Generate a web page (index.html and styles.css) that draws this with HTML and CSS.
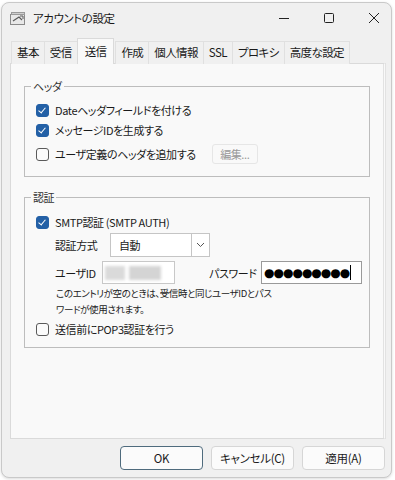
FILE: index.html
```html
<!DOCTYPE html>
<html lang="ja">
<head>
<meta charset="utf-8">
<link rel="stylesheet" href="styles.css">
</head>
<body>
<div class="window">
  <div class="titlebar">
    <svg class="appicon" width="16" height="14" viewBox="0 0 16 14">
      <rect x="0.5" y="2.5" width="14" height="10" fill="#e8e8e8" stroke="#8a8a8a"/>
      <rect x="1.5" y="0.5" width="13" height="2" fill="#cfcfcf" stroke="#9a9a9a"/>
      <path d="M3 9 L9 5 L12 8" fill="none" stroke="#5a5a5a" stroke-width="1.2"/>
      <path d="M10 4 L13 4 L13 7" fill="none" stroke="#5a5a5a" stroke-width="1"/>
    </svg>
    <span class="title">アカウントの設定</span>
    <div class="controls">
      <svg width="12" height="12" viewBox="0 0 12 12"><path d="M1 6.5 H11" stroke="#222" stroke-width="1"/></svg>
      <svg width="12" height="12" viewBox="0 0 12 12"><rect x="1.5" y="1.5" width="9" height="9" rx="1" fill="none" stroke="#222"/></svg>
      <svg width="12" height="12" viewBox="0 0 12 12"><path d="M1 1 L11 11 M11 1 L1 11" stroke="#222" stroke-width="1"/></svg>
    </div>
  </div>

  <div class="tabs">
    <div class="tab">基本</div>
    <div class="tab">受信</div>
    <div class="tab active">送信</div>
    <div class="tab">作成</div>
    <div class="tab">個人情報</div>
    <div class="tab">SSL</div>
    <div class="tab">プロキシ</div>
    <div class="tab">高度な設定</div>
  </div>

  <div class="panel">
    <div class="group g1">
      <div class="legend">ヘッダ</div>
      <div class="row"><span class="cb on"></span><span>Dateヘッダフィールドを付ける</span></div>
      <div class="row"><span class="cb on"></span><span>メッセージIDを生成する</span></div>
      <div class="row r3"><span class="cb"></span><span>ユーザ定義のヘッダを追加する</span><span class="btn-dis">編集...</span></div>
    </div>

    <div class="group g2">
      <div class="legend">認証</div>
      <div class="row"><span class="cb on"></span><span>SMTP認証 (SMTP AUTH)</span></div>
      <div class="sub">
        <div class="field-row fr1">
          <span class="lbl l1">認証方式</span>
          <div class="select"><span class="sel-val">自動</span><span class="sel-arrow"><svg width="9" height="6" viewBox="0 0 9 6"><path d="M1 1 L4.5 4.5 L8 1" fill="none" stroke="#555" stroke-width="1"/></svg></span></div>
        </div>
        <div class="field-row fr2">
          <span class="lbl uid">ユーザID</span>
          <div class="input user"><span class="blur b1"></span><span class="blur b2"></span></div>
          <span class="lbl pw">パスワード</span>
          <div class="input pass"><span class="dots">●●●●●●●●●</span><span class="caret"></span></div>
        </div>
        <p class="note">このエントリが空のときは、受信時と同じユーザIDとパス<br>ワードが使用されます。</p>
      </div>
      <div class="row"><span class="cb"></span><span>送信前にPOP3認証を行う</span></div>
    </div>
  </div>

  <div class="footer">
    <button class="btn default">OK</button>
    <button class="btn">キャンセル(C)</button>
    <button class="btn">適用(A)</button>
  </div>
</div>
</body>
</html>
```
FILE: styles.css
```css
* { box-sizing: border-box; }
html, body { margin: 0; padding: 0; }
body {
  background: #ffffff;
  font-family: "Noto Sans CJK JP", "Noto Sans", sans-serif;
  font-feature-settings: "palt";
  font-size: 11px;
  letter-spacing: -0.4px;
  color: #1a1a1a;
  width: 395px;
  height: 480px;
  overflow: hidden;
  white-space: nowrap;
}
.window {
  margin: 2px 0 0 1px;
  width: 391px;
  height: 476px;
  background: #f0f0f0;
  border: 1px solid #c9c9c9;
  border-radius: 8px;
  box-shadow: 0 1px 3px rgba(0,0,0,0.15);
  display: flex;
  flex-direction: column;
}
.titlebar {
  height: 30px;
  display: flex;
  align-items: center;
  padding-left: 8px;
}
.appicon { margin-right: 7px; margin-top: 1px; }
.title { font-size: 11.5px; color: #1a1a1a; }
.controls {
  margin-left: auto;
  display: flex;
  gap: 33px;
  padding-right: 11px;
}
.tabs {
  display: flex;
  padding-left: 9px;
  margin-top: 7px;
  height: 24px;
  align-items: flex-end;
  position: relative;
  z-index: 1;
}
.tab {
  height: 23px;
  line-height: 21px;
  padding: 0 5px;
  border: 1px solid #e0e0e0;
  border-bottom: none;
  margin-right: -1px;
  background: #f0f0f0;
  font-size: 11.5px;
  letter-spacing: -0.6px;
}
.tab.active {
  height: 26px;
  line-height: 25px;
  background: #f9f9f9;
  border-color: #dadada;
  padding: 0 7px;
  margin: 0 1px 0 0;
}
.panel {
  margin: -1px 5px 0 8px;
  height: 376px;
  background: #f9f9f9;
  border: 1px solid #dadada;
  border-right: 3px double #e2e2e2;
  padding: 22px 13px 0 13px;
}
.group {
  position: relative;
  border: 1px solid #bdbdbd;
  padding: 13px 0 0 11px;
}
.g1 { height: 91px; }
.g2 { margin-top: 20px; padding-top: 14px; padding-bottom: 8px; }
.legend {
  position: absolute;
  top: -9px;
  left: 6px;
  background: #f9f9f9;
  padding: 0 2px;
  line-height: 16px;
  color: #333;
}
.row {
  display: flex;
  align-items: center;
  height: 20px;
  gap: 6px;
}
.r3 { height: 24px; margin-top: 2px; }
.cb {
  width: 13px;
  height: 13px;
  border: 1px solid #5a5a5a;
  border-radius: 3px;
  background: #fbfbfb;
  flex: none;
  position: relative;
}
.cb.on {
  background: #2360a6;
  border-color: #2360a6;
}
.cb.on::after {
  content: "";
  position: absolute;
  left: 3px;
  top: 1px;
  width: 3px;
  height: 6px;
  border: solid #fff;
  border-width: 0 1.3px 1.3px 0;
  transform: rotate(40deg);
}
.btn-dis {
  margin-left: 10px;
  height: 20px;
  width: 46px;
  border: 1px solid #e6e6e6;
  border-radius: 3px;
  background: #f9f9f9;
  color: #9a9a9a;
  display: flex;
  align-items: center;
  justify-content: center;
}
.sub { padding-left: 19px; }
.field-row {
  display: flex;
  align-items: center;
}
.fr1 { margin-top: 1px; }
.fr2 { margin-top: 4px; }
.lbl { margin-right: 8px; }
.l1 { width: 55px; margin-right: 0; }
.uid { width: 47px; margin-right: 0; }
.select {
  width: 100px;
  height: 24px;
  border: 1px solid #c5c5c5;
  background: #fff;
  display: flex;
  align-items: center;
}
.sel-val { flex: 1; padding-left: 8px; }
.sel-arrow {
  width: 18px;
  height: 22px;
  border-left: 1px solid #c5c5c5;
  display: flex;
  align-items: center;
  justify-content: center;
}
.input {
  height: 23px;
  border: 1px solid #c8c8c8;
  background: #fff;
  display: flex;
  align-items: center;
}
.user { width: 73px; padding-left: 2px; gap: 0; }
.blur { height: 14px; background: #d4d4d4; filter: blur(1.5px); }
.b1 { width: 20px; background: #dadada; }
.b2 { width: 32px; margin-left: 4px; }
.pw { width: 86px; margin: 0; padding-left: 34px; }
.pass { width: 101px; padding-left: 2px; border-color: #9a9a9a; }
.dots { font-size: 12px; letter-spacing: -1px; color: #000; font-family: "DejaVu Sans", sans-serif; }
.caret { width: 1px; height: 15px; background: #000; margin-left: 1px; }
.note {
  margin: 1px 0 2px 1px;
  font-size: 9.5px;
  line-height: 16px;
  color: #222;
}
.footer {
  flex: 1;
  display: flex;
  justify-content: flex-end;
  align-items: center;
  gap: 8px;
  padding: 0 6px 1px 0;
}
.btn {
  width: 83px;
  height: 24px;
  font-family: inherit;
  font-feature-settings: "palt";
  font-size: 11.5px;
  letter-spacing: -0.3px;
  color: #1a1a1a;
  background: #fbfbfb;
  border: 1px solid #d6d6d6;
  border-radius: 4px;
  padding: 0;
}
.btn.default { border-color: #4f6b7d; }
```
